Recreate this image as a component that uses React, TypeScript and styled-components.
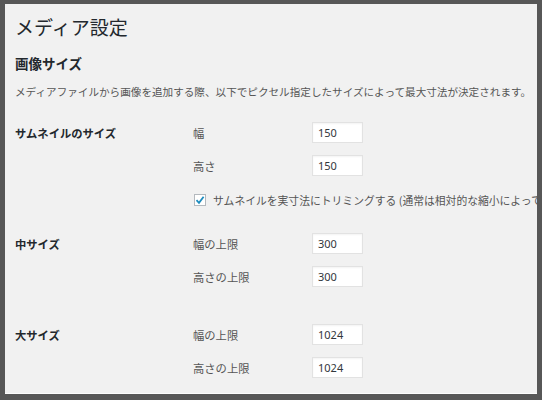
import React from 'react';
import styled, { createGlobalStyle } from 'styled-components';

const Global = createGlobalStyle`
  html, body { margin: 0; padding: 0; background: #575757; }
  body {
    width: 542px; height: 400px; overflow: hidden;
    font-family: "Noto Sans CJK JP", "Noto Sans", sans-serif;
  }
`;

const Frame = styled.div`
  width: 542px;
  height: 400px;
  box-sizing: border-box;
  padding: 4px 5px 6px 5px;
  background: #575757;
`;

const Panel = styled.div`
  height: 100%;
  box-sizing: border-box;
  background: #f1f1f1;
  border-bottom: 1px solid #fcfcfc;
  overflow: hidden;
  padding: 13px 0 0 10px;
  display: flex;
  flex-direction: column;
`;

const Title = styled.h1`
  margin: 0;
  font-size: 19px;
  line-height: 19px;
  font-weight: 400;
  color: #23282d;
`;

const SectionTitle = styled.h2`
  margin: 20px 0 0;
  font-size: 13.5px;
  line-height: 14px;
  font-weight: 700;
  color: #23282d;
`;

const Description = styled.p`
  margin: 16px 0 0;
  font-size: 10.6px;
  line-height: 12px;
  color: #555;
  white-space: nowrap;
`;

const Group = styled.div<{ $top: number }>`
  display: flex;
  margin-top: ${(p) => p.$top}px;
`;

const GroupLabel = styled.div`
  width: 178px;
  flex: none;
  height: 21px;
  line-height: 22px;
  font-size: 11.3px;
  font-weight: 700;
  color: #23282d;
`;

const Fields = styled.div`
  display: flex;
  flex-direction: column;
  gap: 12px;
`;

const FieldRow = styled.label`
  display: flex;
  align-items: center;
  height: 21px;
`;

const FieldLabel = styled.span`
  width: 119px;
  flex: none;
  padding-top: 1px;
  font-size: 11.3px;
  color: #555;
`;

const NumberInput = styled.input`
  box-sizing: border-box;
  width: 51px;
  height: 21px;
  margin: 0;
  padding: 0 5px;
  border: 1px solid #e2e2e2;
  background: #fff;
  box-shadow: inset 0 1px 2px rgba(0, 0, 0, 0.05);
  font-family: "Noto Sans", "Open Sans", sans-serif;
  font-size: 11px;
  color: #32373c;
  outline: none;
`;

const CheckRow = styled.label`
  display: flex;
  align-items: center;
  height: 18px;
  margin-top: 3px;
  white-space: nowrap;
  font-size: 10.8px;
  color: #555;
`;

const Box = styled.span`
  box-sizing: border-box;
  width: 12px;
  height: 12px;
  flex: none;
  margin: 0 7px 0 1px;
  border: 1px solid #b4b9be;
  background: #fff;
  display: flex;
  align-items: center;
  justify-content: center;
`;

const Check = () => (
  <Box>
    <svg width="10" height="10" viewBox="0 0 10 10">
      <path d="M1.5 5.2 L4 7.8 L8.6 1.8" fill="none" stroke="#1e8cbe" strokeWidth="1.8" />
    </svg>
  </Box>
);

type Field = { label: string; value: string };

const SizeGroup = ({ title, fields, top, children }: { title: string; fields: Field[]; top: number; children?: React.ReactNode }) => (
  <Group $top={top}>
    <GroupLabel>{title}</GroupLabel>
    <Fields>
      {fields.map((f) => (
        <FieldRow key={f.label}>
          <FieldLabel>{f.label}</FieldLabel>
          <NumberInput type="text" defaultValue={f.value} />
        </FieldRow>
      ))}
      {children}
    </Fields>
  </Group>
);

export default function App() {
  return (
    <>
      <Global />
      <Frame>
        <Panel>
          <Title>メディア設定</Title>
          <SectionTitle>画像サイズ</SectionTitle>
          <Description>
            メディアファイルから画像を追加する際、以下でピクセル指定したサイズによって最大寸法が決定されます。
          </Description>
          <SizeGroup
            title="サムネイルのサイズ"
            top={24}
            fields={[
              { label: '幅', value: '150' },
              { label: '高さ', value: '150' },
            ]}
          >
            <CheckRow>
              <Check />
              サムネイルを実寸法にトリミングする (通常は相対的な縮小によってサムネイルを作成します)
            </CheckRow>
          </SizeGroup>
          <SizeGroup
            title="中サイズ"
            top={24}
            fields={[
              { label: '幅の上限', value: '300' },
              { label: '高さの上限', value: '300' },
            ]}
          />
          <SizeGroup
            title="大サイズ"
            top={37}
            fields={[
              { label: '幅の上限', value: '1024' },
              { label: '高さの上限', value: '1024' },
            ]}
          />
        </Panel>
      </Frame>
    </>
  );
}
